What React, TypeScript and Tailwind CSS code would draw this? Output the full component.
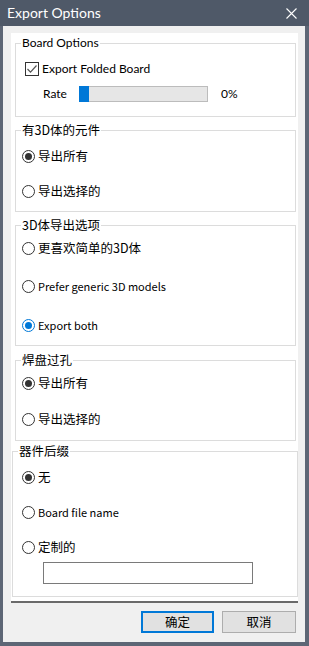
import React from "react";

const F = "font-['Lato','Noto_Sans_CJK_SC',sans-serif]";
const C = "font-['Noto_Sans_CJK_SC',sans-serif]";

function Radio({ checked, focus }: { checked?: boolean; focus?: boolean }) {
  return (
    <div
      className={`w-[13px] h-[13px] rounded-full border bg-white flex items-center justify-center shrink-0 ${
        focus ? "border-[#0078d7]" : "border-[#333333]"
      }`}
    >
      {checked && (
        <div className={`w-[7px] h-[7px] rounded-full ${focus ? "bg-[#0078d7]" : "bg-[#333333]"}`} />
      )}
    </div>
  );
}

function RadioRow({
  label,
  checked,
  focus,
  cjk,
  mt,
}: {
  label: string;
  checked?: boolean;
  focus?: boolean;
  cjk?: boolean;
  mt: string;
}) {
  return (
    <div className={`flex items-center h-[14px] ml-[6px] ${mt}`}>
      <Radio checked={checked} focus={focus} />
      <span
        className={`ml-[3px] text-black whitespace-nowrap ${
          cjk ? `${C} text-[12.5px]` : `${C} text-[11px]`
        }`}
      >
        {label}
      </span>
    </div>
  );
}

function Group({
  title,
  cls,
  children,
  cjk,
}: {
  title: string;
  cls: string;
  children: React.ReactNode;
  cjk?: boolean;
}) {
  return (
    <div className={`relative border border-[#dcdcdc] ${cls}`}>
      <span
        className={`absolute -top-[9px] left-[5px] px-[1px] bg-white leading-[16px] text-black whitespace-nowrap ${
          cjk ? `${C} text-[12.5px]` : `${F} text-[12px]`
        }`}
      >
        {title}
      </span>
      <div className="flex flex-col">{children}</div>
    </div>
  );
}

export default function App() {
  return (
    <div className="w-[309px] h-[646px] flex flex-col bg-[#5d6675] overflow-hidden select-none">
      {/* Title bar */}
      <div className="h-[26px] shrink-0 bg-[#4f5968] flex items-center justify-between">
        <span className={`${F} text-[14px] text-white ml-[7px] leading-none`}>Export Options</span>
        <svg width="11" height="11" viewBox="0 0 11 11" className="mr-[12px]">
          <path d="M0.5 0.5 L10.5 10.5 M10.5 0.5 L0.5 10.5" stroke="#ffffff" strokeWidth="1.1" fill="none" />
        </svg>
      </div>
      {/* Body */}
      <div className="flex-1 ml-[3px] mr-[4px] mb-[4px] bg-[#f0f0f0] flex flex-col">
        <div className="mt-[7px] ml-[8px] w-[287px] h-[570px] bg-white border-b-2 border-[#6a6a6a] flex flex-col">
          {/* Board Options */}
          <Group title="Board Options" cls="mt-[10px] ml-[4px] w-[281px] h-[74px]">
            <div className="flex items-center h-[14px] mt-[18px] ml-[9px]">
              <div className="w-[14px] h-[14px] border border-[#333333] bg-white flex items-center justify-center">
                <svg width="12" height="12" viewBox="0 0 12 12">
                  <path d="M1.5 6 L4.5 9.2 L10.5 2.5" stroke="#555555" strokeWidth="1.2" fill="none" />
                </svg>
              </div>
              <span className={`${F} text-[12px] text-black ml-[3px]`}>Export Folded Board</span>
            </div>
            <div className="flex items-center h-[16px] mt-[10px] ml-[27px]">
              <span className={`${F} text-[12px] text-black w-[36px]`}>Rate</span>
              <div className="w-[129px] h-[16px] bg-[#e6e6e6] border border-[#bcbcbc] flex">
                <div className="w-[10px] bg-[#0078d7] -my-[1px] -ml-[1px] h-[16px]" />
              </div>
              <span className={`${F} text-[12px] text-black ml-[13px]`}>0%</span>
            </div>
          </Group>

          <Group title="有3D体的元件" cjk cls="mt-[13px] ml-[4px] w-[281px] h-[82px]">
            <RadioRow label="导出所有" checked cjk mt="mt-[18px]" />
            <RadioRow label="导出选择的" cjk mt="mt-[21px]" />
          </Group>

          <Group title="3D体导出选项" cjk cls="mt-[13px] ml-[4px] w-[281px] h-[121px]">
            <RadioRow label="更喜欢简单的3D体" cjk mt="mt-[15px]" />
            <RadioRow label="Prefer generic 3D models" mt="mt-[24px]" />
            <RadioRow label="Export both" checked focus mt="mt-[25px]" />
          </Group>

          <Group title="焊盘过孔" cjk cls="mt-[14px] ml-[4px] w-[281px] h-[81px]">
            <RadioRow label="导出所有" checked cjk mt="mt-[15px]" />
            <RadioRow label="导出选择的" cjk mt="mt-[22px]" />
          </Group>

          <Group title="器件后缀" cjk cls="mt-[10px] ml-[1px] w-[286px] h-[146px]">
            <div className="ml-[3px] flex flex-col">
              <RadioRow label="无" checked cjk mt="mt-[18px]" />
              <RadioRow label="Board file name" mt="mt-[21px]" />
              <RadioRow label="定制的" cjk mt="mt-[21px]" />
            </div>
            <div className="ml-[30px] mt-[8px] w-[210px] h-[22px] border border-[#7a7a7a] bg-white" />
          </Group>
        </div>
        {/* Buttons */}
        <div className="flex justify-end gap-[8px] mt-[8px] mr-[9px]">
          <button className="w-[73px] h-[22px] border-2 border-[#0078d7] bg-[#e1e1e1] flex items-center justify-center">
            <span className={`${C} text-[12.5px] text-black`}>确定</span>
          </button>
          <button className="w-[74px] h-[22px] border border-[#adadad] bg-[#e1e1e1] flex items-center justify-center">
            <span className={`${C} text-[12.5px] text-black`}>取消</span>
          </button>
        </div>
      </div>
    </div>
  );
}
